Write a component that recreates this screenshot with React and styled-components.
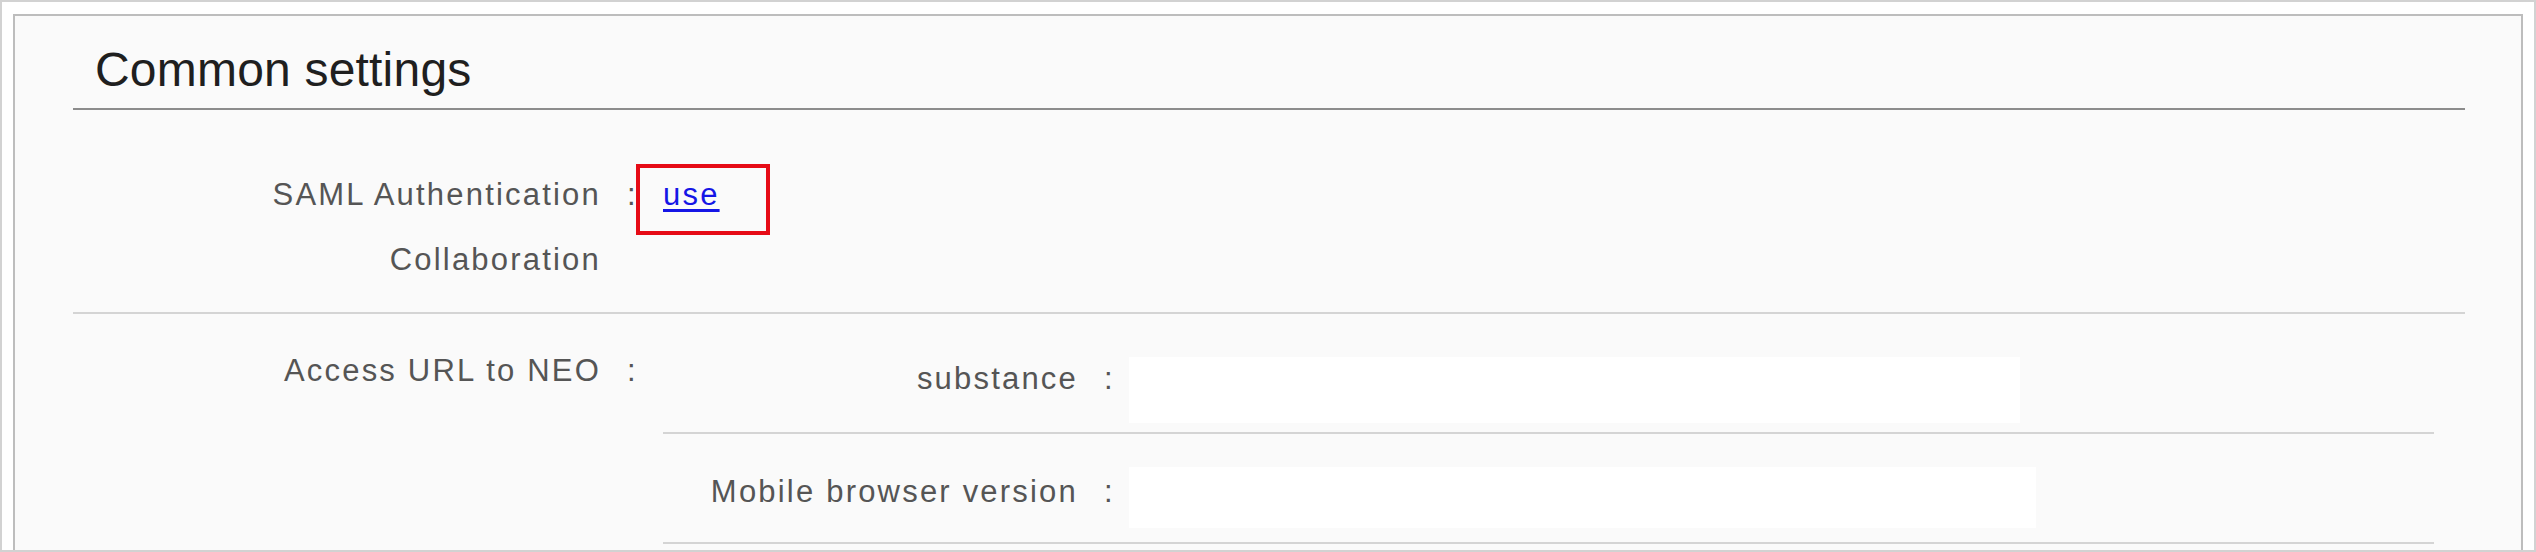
import React from 'react'
import styled, { createGlobalStyle } from 'styled-components'

const Global = createGlobalStyle`
  html, body { margin: 0; padding: 0; background: #fff; }
  body { font-family: "Liberation Sans", Arial, sans-serif; }
`;

const urlRows = [
  { label: 'substance', pt: 43, pb: 9, w: 891, h: 66, shift: 5 },
  { label: 'Mobile browser version', pt: 33, pb: 14, w: 907, h: 61, shift: 8 },
];

function App() {
  return (
    <Frame>
      <Global />
      <Panel>
        <Section>
          <Heading>Common settings</Heading>
          <Row pt={52} pb={20}>
            <Label lh={65}>SAML Authentication<br />Collaboration</Label>
            <Colon lh={65}>:</Colon>
            <Value>
              <Marked>
                <Link href="#">use</Link>
              </Marked>
            </Value>
          </Row>
          <Row pt={0} pb={20} last>
            <Label lh={34} shift={40}>Access URL to NEO</Label>
            <Colon lh={34} shift={40}>:</Colon>
            <SubTable>
              {urlRows.map((r) =>
                <SubRow key={r.label} pt={r.pt} pb={r.pb}>
                  <SubLabel shift={r.shift}>{r.label}</SubLabel>
                  <SubColon shift={r.shift}>:</SubColon>
                  <UrlBox readOnly value="" w={r.w} h={r.h} />
                </SubRow>
              )}
            </SubTable>
          </Row>
        </Section>
      </Panel>
    </Frame>
  )
}

const Frame = styled.div`
  box-sizing: border-box;
  width: 2536px; height: 552px;
  border: 2px solid #d2d2d2;
  padding: 12px 11px 0 11px;
  overflow: hidden;
`;
const Panel = styled.div`
  border: 2px solid #bdbdbd;
  background: #fafafa;
  padding: 0 56px 40px 58px;
`;
const Section = styled.div`
  display: flex; flex-direction: column;
`;
const Heading = styled.h2`
  margin: 0;
  padding: 26px 0 10px 22px;
  font-size: 48px; line-height: 56px; font-weight: normal;
  letter-spacing: 0.2px;
  color: #1f1f1f;
  border-bottom: 2px solid #8c8c8c;
`;
const Row = styled.div`
  display: grid;
  grid-template-columns: 528px 62px 1fr;
  align-items: start;
  padding: ${p => p.pt}px 0 ${p => p.pb}px 0;
  border-bottom: ${p => p.last ? 'none' : '2px solid #d4d4d4'};
`;
const Label = styled.div`
  text-align: right;
  font-size: 31px; line-height: ${p => p.lh}px;
  letter-spacing: 2.2px;
  color: #555;
  margin-top: ${p => p.shift || 0}px;
`;
const Colon = styled.div`
  padding-left: 26px;
  font-size: 31px; line-height: ${p => p.lh}px;
  color: #555;
  margin-top: ${p => p.shift || 0}px;
`;
const Value = styled.div`
  font-size: 31px; line-height: 65px;
`;
const Marked = styled.span`
  position: relative;
  display: inline-block;
  line-height: 34px;
  &::after {
    content: '';
    position: absolute;
    top: -14px; bottom: -23px; left: -27px; right: -50px;
    border: 4px solid #e60b16;
    pointer-events: none;
  }
`;
const Link = styled.a`
  color: #1515e6;
  letter-spacing: 2.2px;
  text-decoration: underline;
  text-decoration-thickness: 3px;
  text-underline-offset: 4px;
`;
const SubTable = styled.div`
  display: flex; flex-direction: column;
  margin-right: 31px;
`;
const SubRow = styled.div`
  display: grid;
  grid-template-columns: 415px 51px 1fr;
  align-items: start;
  padding: ${p => p.pt}px 0 ${p => p.pb}px 0;
  border-bottom: 2px solid #d4d4d4;
`;
const SubLabel = styled.div`
  text-align: right;
  font-size: 31px; line-height: 34px;
  letter-spacing: 2.2px;
  color: #555;
  margin-top: ${p => p.shift}px;
`;
const SubColon = styled.div`
  padding-left: 26px;
  font-size: 31px; line-height: 34px;
  color: #555;
  margin-top: ${p => p.shift}px;
`;
const UrlBox = styled.input`
  box-sizing: border-box;
  width: ${p => p.w}px; height: ${p => p.h}px;
  border: none; outline: none;
  background: #fff;
  padding: 0 10px;
  font-size: 24px;
`;

export default App
